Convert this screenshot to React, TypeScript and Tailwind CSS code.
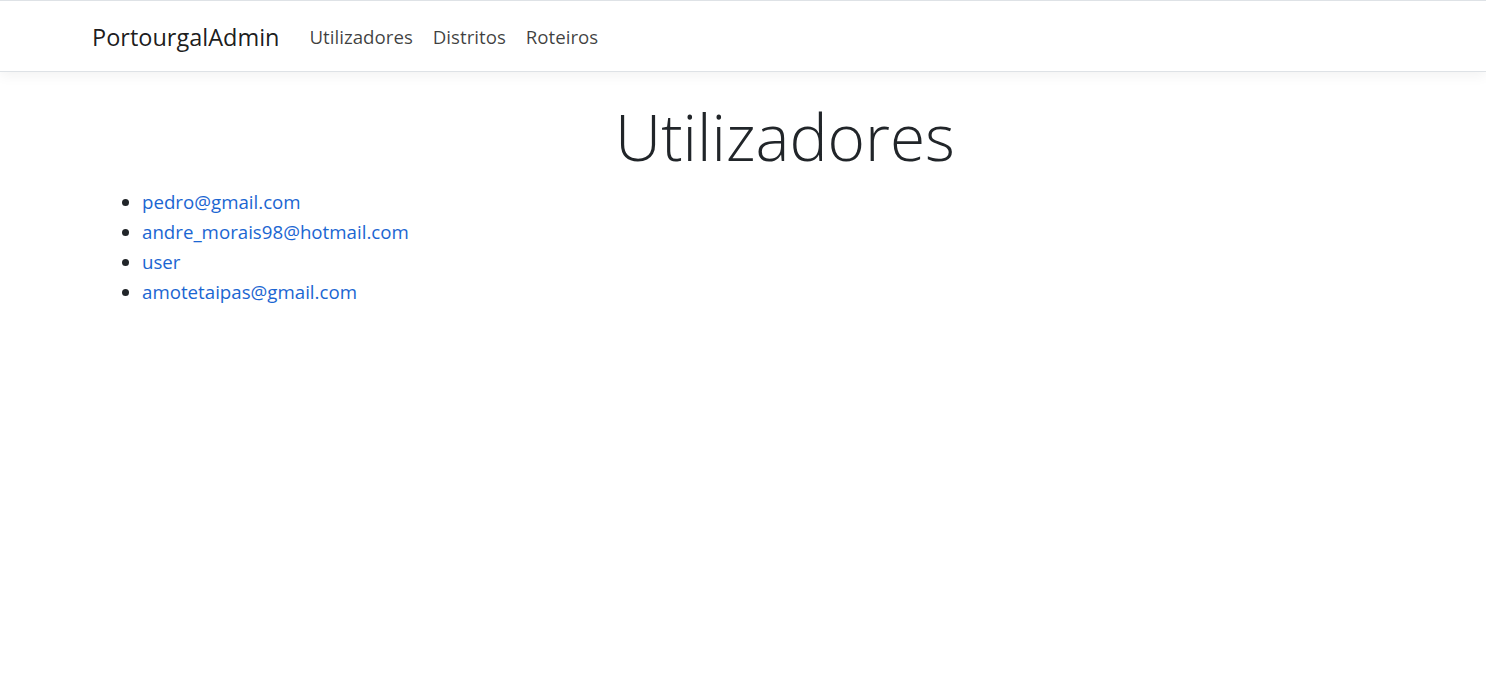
import React from 'react'

const users = [
  'pedro@gmail.com',
  'andre_morais98@hotmail.com',
  'user',
  'amotetaipas@gmail.com',
]

export default function App() {
  return (
    <div className="min-h-[675px] bg-white text-[#212529] font-['Open_Sans',sans-serif]">
      {/* Navbar */}
      <header className="border-t border-b border-[#dee2e6] shadow-[0_4px_12px_rgba(0,0,0,0.05)]">
        <nav className="mx-auto flex h-[70px] w-[1320px] items-center px-[9px] pt-[3px]">
          <a href="#" className="mr-[30px] text-[23.5px] text-black/90">
            PortourgalAdmin
          </a>
          <ul className="flex items-center gap-[20px] text-[18.7px] text-black/75">
            <li><a href="#">Utilizadores</a></li>
            <li><a href="#">Distritos</a></li>
            <li><a href="#">Roteiros</a></li>
          </ul>
        </nav>
      </header>

      {/* Main */}
      <main className="mx-auto w-[1320px] px-[12px] pt-[30px]">
        <h1 className="pl-[84px] text-center text-[64px] font-light leading-[1.1]">Utilizadores</h1>
        <ul className="mt-[15px] list-disc pl-[47px] text-[18.7px]">
          {users.map(u => (
            <li key={u} className="leading-[30px]">
              <a href="#" className="text-[#1b66d2]">{u}</a>
            </li>
          ))}
        </ul>
      </main>
    </div>
  )
}
